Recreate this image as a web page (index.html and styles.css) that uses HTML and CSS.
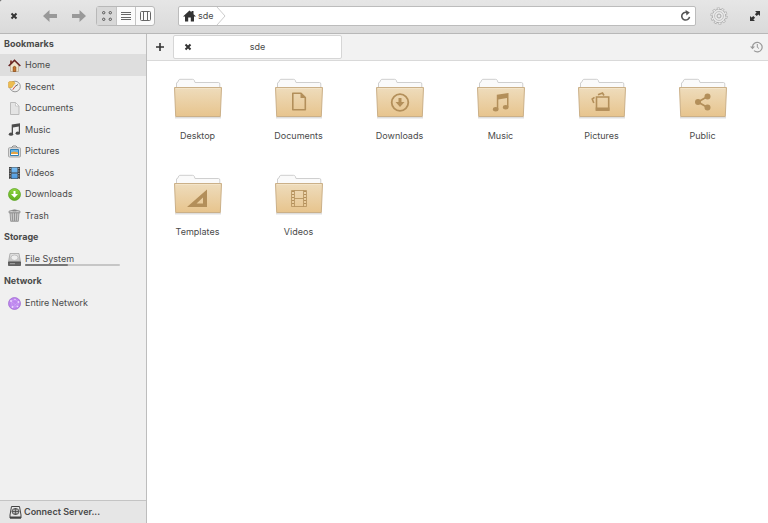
FILE: index.html
```html
<!DOCTYPE html>
<html lang="en">
<head>
<meta charset="utf-8">
<title>sde</title>
<link rel="stylesheet" href="styles.css">
</head>
<body>
<svg class="defs" width="0" height="0" aria-hidden="true">
  <defs>
    <linearGradient id="tan" x1="0" y1="0" x2="0" y2="1"><stop offset="0" stop-color="#eedcbc"/><stop offset="1" stop-color="#e7c48d"/></linearGradient>
    <linearGradient id="disk" x1="0" y1="0" x2="0" y2="1"><stop offset="0" stop-color="#e4e4e4"/><stop offset="1" stop-color="#bdbdbd"/></linearGradient>
    <linearGradient id="green" x1="0" y1="0" x2="0" y2="1"><stop offset="0" stop-color="#8fd43f"/><stop offset="1" stop-color="#5fae1e"/></linearGradient>
    <linearGradient id="sky" x1="0" y1="0" x2="0" y2="1"><stop offset="0" stop-color="#7cc0f5"/><stop offset="1" stop-color="#4d98de"/></linearGradient>
    <symbol id="folder" viewBox="0 0 52 44">
      <path d="M3 41.5H49" stroke="#000" stroke-opacity=".13" stroke-width="2"/>
      <path d="M4.500 13V7Q4.500 6.500 5.500 6.500L6.800 4Q7.200 3.300 8 3.300H20.500Q21.800 3.300 22.200 4.200L23 6.500H46.500Q47.800 6.500 47.800 8V13Z" fill="#fafafa" stroke="#cfcfcf"/>
      <path d="M2.500 11.500H49.500L48.300 40.500H3.700Z" fill="url(#tan)" stroke="#cbb088" stroke-linejoin="round"/>
      <path d="M4 12.500H48" stroke="#f5e8ce" stroke-opacity=".7"/>
    </symbol>
    <symbol id="close" viewBox="0 0 8 8"><path d="M1.500 1.500 6.500 6.500M6.500 1.500 1.500 6.500" stroke="#333" stroke-width="2"/></symbol>
    <symbol id="arrow" viewBox="0 0 14 12"><path d="M6.500 0V4H14V8H6.500V12L0 6Z" fill="#999"/></symbol>
  </defs>
</svg>
<div class="window">
  <header class="toolbar">
    <button class="tool close-window" aria-label="Close"><svg width="8" height="8"><use href="#close"/></svg></button>
    <button class="tool" aria-label="Back"><svg width="14" height="12"><use href="#arrow"/></svg></button>
    <button class="tool forward" aria-label="Forward"><svg width="14" height="12"><use href="#arrow"/></svg></button>
    <div class="views">
      <button class="view active" aria-label="View as grid"><svg width="10" height="10" viewBox="0 0 10 10" fill="none" stroke="#555"><circle cx="1.700" cy="1.700" r="1.200"/><circle cx="8.300" cy="1.700" r="1.200"/><circle cx="1.700" cy="8.300" r="1.200"/><circle cx="8.300" cy="8.300" r="1.200"/></svg></button>
      <button class="view" aria-label="View as list"><svg width="10" height="10" viewBox="0 0 10 10" stroke="#666"><path d="M0 1.500H10M0 3.500H10M0 6.500H10M0 8.500H10"/></svg></button>
      <button class="view" aria-label="View in columns"><svg width="11" height="10" viewBox="0 0 11 10" fill="none" stroke="#666"><rect x=".5" y=".5" width="10" height="9" rx="1"/><path d="M3.500 1V9M7.500 1V9"/></svg></button>
    </div>
    <nav class="path" aria-label="Location">
      <a class="crumb" href="#"><svg width="13" height="12" viewBox="0 0 13 12"><path d="M6.500.5 8.500 2.300V1H10.500V4.200L13 6.500H11V11.500H7.800V7.500H5.200V11.500H2V6.500H0Z" fill="#333"/></svg>sde</a>
      <svg class="chevron" width="10" height="18" viewBox="0 0 10 18"><path d="M1 0 9 9 1 18" fill="none" stroke="#ccc"/></svg>
      <button class="tool reload" aria-label="Reload"><svg width="11" height="12" viewBox="0 0 11 12"><path d="M7 2.500A3.900 3.900 0 1 0 9.500 6.800" fill="none" stroke="#555" stroke-width="1.600"/><path d="M5.500 0 9.800 2.500 6.500 5.500Z" fill="#555"/></svg></button>
    </nav>
    <button class="tool gear" aria-label="Settings"><svg width="18" height="18" viewBox="0 0 18 18" fill="none" stroke="#aaa"><circle cx="9" cy="9" r="7.600" stroke-width="2" stroke-dasharray="2.800 1.975"/><circle cx="9" cy="9" r="6.800" fill="#e8e8e8"/><circle cx="9" cy="9" r="7.200" stroke="#e8e8e8" stroke-width="1.500" stroke-dasharray="1.800 2.724" stroke-dashoffset="-.5"/><circle cx="9" cy="9" r="4.500" stroke="#c4c4c4"/><circle cx="9" cy="9" r="2"/></svg></button>
    <button class="tool maximize" aria-label="Maximize"><svg width="10" height="10" viewBox="0 0 10 10" fill="#333"><path d="M5 0H10V5L8.400 3.400 6.700 5.100 4.900 3.300 6.600 1.600ZM0 5V10H5L3.400 8.400 5.100 6.700 3.300 4.900 1.600 6.600Z"/></svg></button>
  </header>
  <div class="main">
    <aside class="sidebar">
      <section>
        <h2 class="first">Bookmarks</h2>
        <ul>
          <li><a class="place active" href="#"><svg width="13" height="13" viewBox="0 0 13 13"><path d="M2.500 6 6.500 2 10.500 6V12.500H2.500Z" fill="#eee2ca" stroke="#ab9b82" stroke-width=".6"/><path d="M2 1.500H4V4L2 5Z" fill="#8b4a3b"/><path d="M.7 7 6.500 1.300 12.300 7" fill="none" stroke="#682322" stroke-width="1.600"/><path d="M5.200 12.500V8Q6.500 6.700 7.800 8V12.500Z" fill="#c9752b" stroke="#844312" stroke-width=".7"/></svg>Home</a></li>
          <li><a class="place" href="#"><svg width="13" height="13" viewBox="0 0 13 13"><circle cx="7" cy="6.500" r="5.300" fill="#eee" stroke="#999"/><path d="M7 6.500 10 4.500" stroke="#666" fill="none"/><path d="M7 6.500 4.800 9.700" stroke="#d24b32"/><path d="M.5 3.500Q0 2 1.500 1.500L6 1.500 7 3.500 5.500 5 4 7.500H.5Z" fill="#edbd50" stroke="#cf9530" stroke-width=".5"/></svg>Recent</a></li>
          <li><a class="place" href="#"><svg width="13" height="13" viewBox="0 0 13 13"><path d="M2.500.5H7.500L11 4V12.500H2.500Z" fill="#e4e4e4" stroke="#bbb"/><path d="M7.500.5V4H11Z" fill="#fff" stroke="#bbb" stroke-width=".7"/></svg>Documents</a></li>
          <li><a class="place" href="#"><svg width="13" height="13" viewBox="0 0 13 13" fill="#4c4c4c"><path d="M3.700 1.500 12 .3V10H10.800V3.500L5 4.400V11H3.700Z"/><ellipse cx="3" cy="11.200" rx="2.200" ry="1.600"/><ellipse cx="9.800" cy="10.200" rx="2.200" ry="1.600"/></svg>Music</a></li>
          <li><a class="place" href="#"><svg width="13" height="13" viewBox="0 0 13 13"><path d="M3 3 5 1H8L10 3" fill="none" stroke="#858585"/><rect x=".5" y="2.700" width="12" height="9.300" rx="1" fill="#ddd" stroke="#999" stroke-width=".8"/><path d="M2.500 4.500H10.500V10.500H2.500Z" fill="#69b5e7" stroke="#317fb4"/><path d="M3 7.500 6 6.500 10 7.500V9H3Z" fill="#e5a443"/><path d="M3 9.500H10" stroke="#fff"/></svg>Pictures</a></li>
          <li><a class="place" href="#"><svg width="13" height="13" viewBox="0 0 13 13"><path d="M1 1H12V13H1Z" fill="#444"/><path d="M3.500 1.500H9.500V6.500H3.500ZM3.500 7.500H9.500V12.500H3.500Z" fill="url(#sky)"/><path d="M2.200 2V13M10.800 2V13" stroke="#bbb" stroke-dasharray="1 1.500"/></svg>Videos</a></li>
          <li><a class="place" href="#"><svg width="13" height="13" viewBox="0 0 13 13"><circle cx="6.500" cy="6.500" r="6" fill="url(#green)" stroke="#58a01e" stroke-width=".7"/><path d="M5.500 3H7.500V6H10L6.500 9.800 3 6H5.500Z" fill="#fff"/></svg>Downloads</a></li>
          <li><a class="place" href="#"><svg width="13" height="13" viewBox="0 0 13 13"><path d="M2 3.500H11L10.300 12.300H2.700Z" fill="#c9c9c9" stroke="#888" stroke-width=".8"/><path d="M4.200 4 4.700 12M6.500 4V12M8.800 4 8.300 12" stroke="#888" stroke-width=".8"/><path d="M1 3.800V2.200Q6.500-.5 12 2.200V3.800Z" fill="#d2d2d2" stroke="#858585" stroke-width=".8"/><path d="M4.500 1.800H8.500" stroke="#777"/></svg>Trash</a></li>
        </ul>
      </section>
      <section>
        <h2>Storage</h2>
        <ul>
          <li><a class="place" href="#"><svg width="13" height="13" viewBox="0 0 13 13"><path d="M2 .5H11L12.500 9H.5Z" fill="url(#disk)" stroke="#999" stroke-width=".7"/><ellipse cx="6.500" cy="4.700" rx="3.500" ry="2.700" fill="#eee" stroke="#aaa" stroke-width=".6"/><path d="M.5 9H12.500V12.500H.5Z" fill="#666" stroke="#444" stroke-width=".7"/><path d="M2 10.700H7" stroke="#aaa"/></svg><span class="drive">File System<span class="usage"><span class="used"></span></span></span></a></li>
        </ul>
      </section>
      <section>
        <h2>Network</h2>
        <ul>
          <li><a class="place" href="#"><svg width="13" height="13" viewBox="0 0 13 13"><circle cx="6.500" cy="6.500" r="6" fill="#bd86ee" stroke="#9c64ce" stroke-width=".7"/><path d="M3 4 7 2.500 10.500 5 9.500 9.500 4.500 10 3 4 9.500 9.500M10.500 5 4.500 10" fill="none" stroke="#d0a8f6" stroke-width=".6"/><g fill="#ecd8fc"><circle cx="3" cy="4" r=".9"/><circle cx="7" cy="2.500" r=".7"/><circle cx="10.500" cy="5" r=".9"/><circle cx="9.500" cy="9.500" r=".8"/><circle cx="4.500" cy="10" r=".9"/></g></svg>Entire Network</a></li>
        </ul>
      </section>
      <button class="connect"><svg width="13" height="13" viewBox="0 0 13 13" fill="none" stroke="#444"><path d="M2.500.5H10.500L12 9V12H1V9Z"/><path d="M1 11.500H12" stroke-width="2"/><ellipse cx="6.500" cy="5.500" rx="3.500" ry="3" stroke-width=".9"/><path d="M3 5.500H10M6.500 2.500V8.500" stroke-width=".8"/><ellipse cx="6.500" cy="5.500" rx="1.700" ry="3" stroke-width=".6"/></svg>Connect Server...</button>
    </aside>
    <main class="content">
      <div class="tabs">
        <button class="tool add" aria-label="New tab"><svg width="8" height="8" viewBox="0 0 8 8"><path d="M4 0V8M0 4H8" stroke="#333" stroke-width="1.600"/></svg></button>
        <div class="tab"><button class="tool" aria-label="Close tab"><svg width="8" height="8"><use href="#close"/></svg></button><span class="tab-name">sde</span></div>
        <button class="tool history" aria-label="Closed tabs"><svg width="13" height="12" viewBox="0 0 13 12" fill="none" stroke="#999"><path d="M2.500 6A4.800 4.800 0 1 1 4 9.600" stroke-width="1.200"/><path d="M7.300 3V6.300L9 7.500"/><path d="M0 5.500H5L2.500 8.200Z" fill="#999" stroke="none"/></svg></button>
      </div>
      <div class="files">
        <a class="file" href="#"><svg width="52" height="44"><use href="#folder"/></svg><span>Desktop</span></a>
        <a class="file" href="#"><svg width="52" height="44"><use href="#folder"/><path d="M19.800 17.300H28L32.300 21.500V33.700H19.800Z" fill="none" stroke="#b38f5a" stroke-width="1.600" stroke-linejoin="round"/><path d="M27.500 17V22H33Z" fill="#b38f5a"/></svg><span>Documents</span></a>
        <a class="file" href="#"><svg width="52" height="44"><use href="#folder"/><circle cx="26" cy="26.500" r="8.300" fill="none" stroke="#b38f5a" stroke-width="1.800"/><path d="M24.500 22H27.500V26H30.500L26 31 21.500 26H24.500Z" fill="#b38f5a"/></svg><span>Downloads</span></a>
        <a class="file" href="#"><svg width="52" height="44"><use href="#folder"/><g fill="#b38f5a"><path d="M21.800 18.800 33.500 17V31H32V22L23.300 23.500V33H21.800Z"/><ellipse cx="20.700" cy="33.200" rx="2.800" ry="2.200"/><ellipse cx="30.700" cy="31.200" rx="2.800" ry="2.200"/></g></svg><span>Music</span></a>
        <a class="file" href="#"><svg width="52" height="44"><use href="#folder"/><path d="M20.500 21H32.700V34H20.500Z" fill="none" stroke="#b38f5a" stroke-width="1.600"/><path d="M19.700 31.500H33.500V34.800H19.700Z" fill="#b38f5a"/><path d="M22 18.800 26.500 17 28 19.500M18.500 21.300 16.200 23 17.800 27" fill="none" stroke="#b38f5a" stroke-width="1.600"/></svg><span>Pictures</span></a>
        <a class="file" href="#"><svg width="52" height="44"><use href="#folder"/><path d="M30.500 20.500 21 26 30.500 31.500" fill="none" stroke="#b38f5a" stroke-width="1.800"/><g fill="#b38f5a"><circle cx="30.500" cy="20.500" r="3"/><circle cx="21" cy="26" r="3"/><circle cx="30.500" cy="31.500" r="3"/></g></svg><span>Public</span></a>
        <a class="file" href="#"><svg width="52" height="44"><use href="#folder"/><path d="M15 35 35 17.500V35ZM24.500 31.500H31V25.500Z" fill="#b38f5a" fill-rule="evenodd"/></svg><span>Templates</span></a>
        <a class="file" href="#"><svg width="52" height="44"><use href="#folder"/><g fill="none" stroke="#b38f5a" stroke-width=".8"><path d="M18.500 18.500H33.500V34.500H18.500ZM21.500 18.500V34.500M30.500 18.500V34.500M21.500 26.500H30.500"/><path d="M20 19V34M32 19V34" stroke-width="2" stroke-dasharray="1 2"/></g></svg><span>Videos</span></a>
      </div>
    </main>
  </div>
</div>
</body>
</html>
```
FILE: styles.css
```css
* {
  box-sizing: border-box;
}

body {
  margin: 0;
  background: #444;
  color: #4a4a4a;
  font: 9px/14px Inter, "Liberation Sans", sans-serif;
}

.defs {
  position: absolute;
}

svg {
  display: block;
  flex: none;
}

button {
  padding: 0;
  border: 0;
  background: none;
  color: inherit;
  font: inherit;
}

a {
  color: inherit;
  text-decoration: none;
}

.window {
  display: flex;
  flex-direction: column;
  min-height: 100vh;
}

.toolbar {
  display: flex;
  align-items: center;
  height: 34px;
  padding: 0 8px 2px 10px;
  border-bottom: 1px solid #b8b8b8;
  border-radius: 2px 0 0 0;
  background: linear-gradient(#e6e6e6, #dadada);
}

.tool {
  display: flex;
  align-items: center;
  justify-content: center;
}

.close-window {
  margin-right: 25px;
}

.forward {
  margin: 0 10px 0 15px;
  transform: scaleX(-1);
}

.views {
  display: flex;
  height: 20px;
  border: 1px solid #b8b8b8;
  border-radius: 3px;
  background: #fbfbfb;
}

.view {
  display: flex;
  align-items: center;
  justify-content: center;
  width: 19px;
}

.view + .view {
  border-left: 1px solid #c4c4c4;
}

.view.active {
  background: #d8d8d8;
}

.path {
  display: flex;
  flex: 1;
  align-items: center;
  height: 20px;
  margin: 0 14px 0 23px;
  padding: 0 4px;
  border: 1px solid #bcbcbc;
  border-radius: 2px;
  background: #fff;
}

.crumb {
  display: flex;
  align-items: center;
  gap: 2px;
}

.chevron {
  margin-left: 2px;
}

.reload {
  margin-left: auto;
}

.maximize {
  margin-left: 22px;
}

.main {
  display: flex;
  flex: 1;
}

.sidebar {
  display: flex;
  flex-direction: column;
  width: 147px;
  border-right: 1px solid #bdbdbd;
  background: #f0f0f0;
}

h2 {
  margin: 0;
  padding-left: 4px;
  font-size: 9px;
  font-weight: 700;
  line-height: 22px;
}

.first {
  line-height: 20px;
}

ul {
  display: grid;
  grid-auto-rows: 22px 21px;
  margin: 0;
  padding: 0;
  list-style: none;
}

.place {
  display: flex;
  align-items: center;
  gap: 4px;
  height: 100%;
  padding-left: 8px;
}

.place.active {
  background: #dedede;
}

.drive {
  position: relative;
  width: 95px;
}

.usage {
  position: absolute;
  top: 12px;
  left: 0;
  width: 100%;
  height: 2px;
  border-radius: 1px;
  background: #c6c6c6;
}

.used {
  display: block;
  width: 45%;
  height: 100%;
  border-radius: 1px;
  background: #777;
}

.connect {
  display: flex;
  align-items: center;
  gap: 2px;
  height: 23px;
  margin-top: auto;
  padding-left: 9px;
  border-top: 1px solid #c4c4c4;
  background: #e6e6e6;
  font-weight: 600;
}

.content {
  flex: 1;
  background: #fff;
}

.tabs {
  display: flex;
  align-items: center;
  height: 27px;
  padding: 0 5px 0 9px;
  border-bottom: 1px solid #d9d9d9;
  background: #f2f2f2;
}

.tab {
  display: flex;
  align-items: center;
  width: 169px;
  height: 24px;
  margin-left: 9px;
  padding: 0 10px;
  border: 1px solid #d6d6d6;
  border-radius: 2px;
  background: #fff;
}

.tab-name {
  flex: 1;
  padding-right: 8px;
  text-align: center;
}

.history {
  margin-left: auto;
}

.files {
  display: grid;
  grid-template-columns: repeat(auto-fill, 101px);
  grid-auto-rows: 96px;
  padding-top: 15px;
}

.file {
  display: flex;
  flex-direction: column;
  align-items: center;
  gap: 9px;
}
```
